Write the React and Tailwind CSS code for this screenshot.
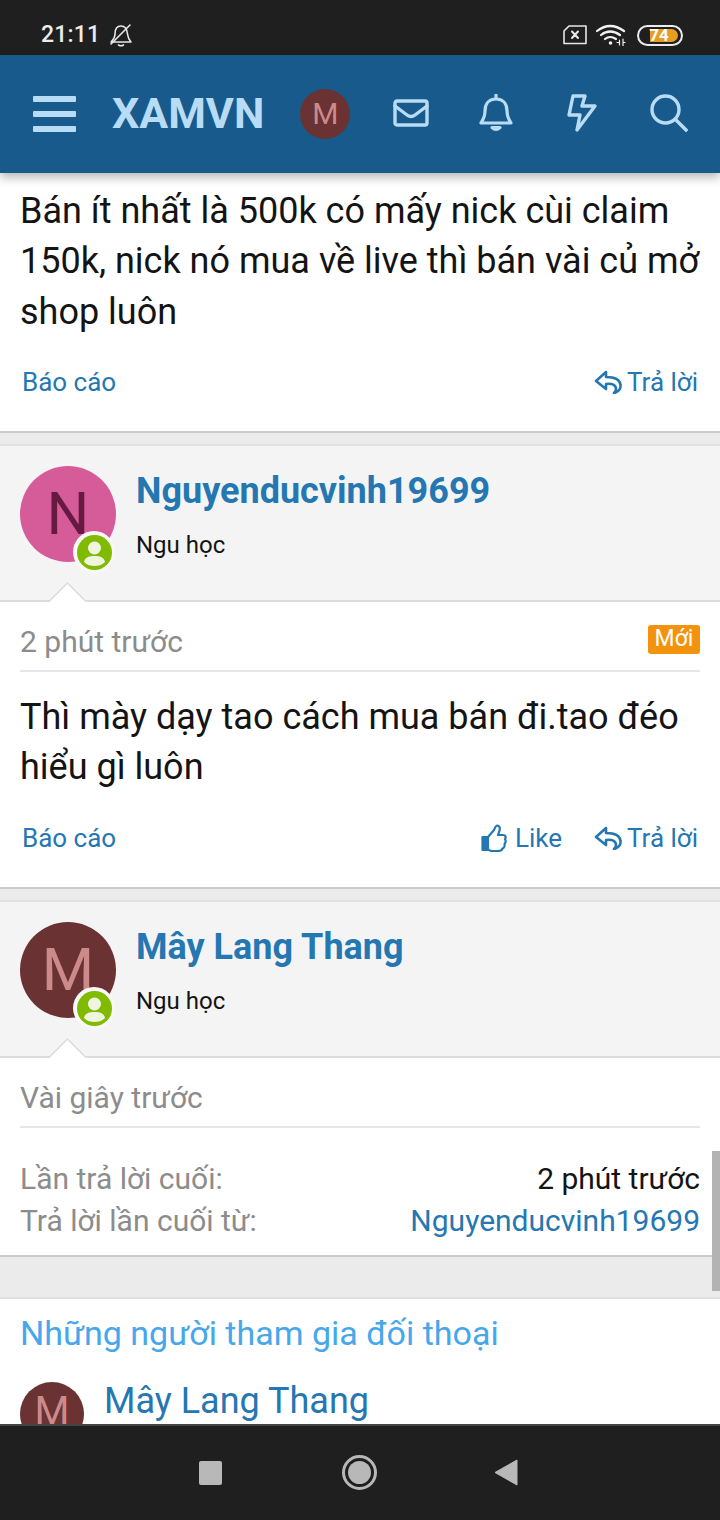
import React from 'react'

const MenuIcon = () => (
  <svg width="44" height="36" viewBox="0 0 44 36" fill="#b8dcf5">
    <rect x="0" y="0" width="43" height="6" rx="1" />
    <rect x="0" y="15" width="43" height="6" rx="1" />
    <rect x="0" y="30" width="43" height="6" rx="1" />
  </svg>
)

const MailIcon = () => (
  <svg width="36" height="28" viewBox="0 0 36 28" fill="none" stroke="#b8dcf5" strokeWidth="3.4" strokeLinejoin="round" strokeLinecap="round">
    <rect x="2" y="2" width="32" height="24" rx="2" />
    <path d="M2 7 L14 16 Q18 19 22 16 L34 7" />
  </svg>
)

const BellIcon = () => (
  <svg width="34" height="38" viewBox="0 0 34 38" fill="none" stroke="#b8dcf5" strokeWidth="3.2" strokeLinejoin="round" strokeLinecap="round">
    <path d="M17 5 C9 5 6 11 6 17 C6 23 4 26 2 29 H32 C30 26 28 23 28 17 C28 11 25 5 17 5 Z" />
    <path d="M17 1 V4" />
    <path d="M13 33.5 Q17 37 21 33.5 Z" fill="#b8dcf5" />
  </svg>
)

const BoltIcon = () => (
  <svg width="30" height="38" viewBox="0 0 30 38" fill="none" stroke="#b8dcf5" strokeWidth="3.4" strokeLinejoin="round" strokeLinecap="round">
    <path d="M6 2 H18 L15 12 H28 L10 36 L13 21 H2 Z" />
  </svg>
)

const SearchIcon = () => (
  <svg width="38" height="38" viewBox="0 0 38 38" fill="none" stroke="#b8dcf5" strokeWidth="3.4" strokeLinecap="round">
    <circle cx="15.5" cy="15.5" r="13.5" />
    <path d="M25.5 25.5 L36 36" strokeLinecap="square" />
  </svg>
)

const MutedBell = () => (
  <svg width="24" height="24" viewBox="0 0 24 24" fill="none" stroke="#e8e8e8" strokeWidth="1.6" strokeLinejoin="round" strokeLinecap="round">
    <path d="M12 3 C7 3 6 8 6 11 C6 14 4 17 2 19 H22 C20 17 19 15 18.5 11 C18 6 16 3 12 3 Z" />
    <path d="M9.5 22 Q12 23.5 14.5 22" />
    <path d="M2 21 L21 2" />
  </svg>
)

const SimIcon = () => (
  <svg width="26" height="20" viewBox="0 0 26 20" fill="none" stroke="#e8e8e8" strokeWidth="1.6" strokeLinejoin="round" strokeLinecap="round">
    <path d="M7 1 H24 V18.5 H2 V6 Z" />
    <path d="M10 6.5 L16 13 M16 6.5 L10 13" strokeWidth="2" />
  </svg>
)

const WifiIcon = () => (
  <svg width="30" height="22" viewBox="0 0 30 22" fill="none" stroke="#f2f2f2" strokeWidth="2.2" strokeLinecap="round">
    <path d="M1 7 Q14 -3 28 7" />
    <path d="M5 11 Q14 4 24 11" />
    <path d="M9 15 Q14 11 20 15" />
    <circle cx="14.5" cy="19" r="1.8" fill="#f2f2f2" stroke="none" />
    <path d="M23.5 16 V21 M27 15 V22 M21 18.5 H23 M27 18.5 H29" strokeWidth="1.2" />
  </svg>
)

const ThumbIcon = () => (
  <svg width="26" height="28" viewBox="0 0 26 28" fill="none" stroke="#2577b1" strokeWidth="2.2" strokeLinejoin="round" strokeLinecap="round">
    <path d="M7 13 L13 6 C14 4 14 2 16 1.5 C19 1.5 19.5 5 18 8 L17 11 H22 C25 11 25 14 24 15 C25 17 24.5 19 23.5 20 C24 22 23 24 21.5 24.5 C21 26.5 19 27 17 27 H11 C9 27 8 26 7 25.5" />
    <rect x="1.5" y="13" width="5.5" height="13" fill="#2577b1" />
  </svg>
)

const ReplyIcon = () => (
  <svg width="28" height="24" viewBox="0 0 28 24" fill="none" stroke="#2577b1" strokeWidth="2.6" strokeLinejoin="round" strokeLinecap="round">
    <path d="M12 2 L2 11 L12 19 V14 C18 13 22 15 22 19 C22 21 21 22 20 23 C24 22 27 19 26.5 15 C26 9 20 7 12 7 Z" />
  </svg>
)

const PersonBadge = () => (
  <div className="absolute left-[73px] top-[85px] w-[42px] h-[42px] rounded-full bg-[#f9f9f9] flex items-center justify-center">
    <svg width="35" height="35" viewBox="0 0 35 35">
      <circle cx="17.5" cy="17.5" r="17.5" fill="#80bb00" />
      <circle cx="17.5" cy="13" r="6.5" fill="#f0f5e0" />
      <path d="M7 27 C8 22 12 21 17.5 21 C23 21 27 22 28 27 C25 30 21 31 17.5 31 C14 31 10 30 7 27 Z" fill="#f0f5e0" />
    </svg>
  </div>
)

const UserHead = ({ initial, bg, fg, name }) => (
  <div className="relative bg-[#f4f4f4] border-t-2 border-b-2 border-t-[#e0e0e0] border-b-[#dcdcdc] h-[158px] pl-5 pt-[20px]">
    <div className="flex">
      <div className="w-24 h-24 shrink-0 rounded-full flex items-center justify-center text-[60px] leading-none" style={{ backgroundColor: bg, color: fg }}>
        {initial}
      </div>
      <div className="pl-5 pt-[1px]">
        <div className="text-[36px] leading-[48px] font-bold text-[#2577b1]">{name}</div>
        <div className="text-[24px] leading-[32px] mt-[14px] text-[#141414]">Ngu học</div>
      </div>
    </div>
    <PersonBadge />
    {/* notch */}
    <svg className="absolute left-[48px] -bottom-[2px]" width="40" height="20" viewBox="0 0 40 20">
      <path d="M1 20 L20 1 L39 20 Z" fill="#ffffff" />
      <path d="M1 19.5 L19.5 1 L38 19.5" fill="none" stroke="#dcdcdc" strokeWidth="1.5" />
    </svg>
  </div>
)

const Gap = () => <div className="h-[13px] bg-[#ebebeb] border-t-2 border-[#cbcbcb]" />

const Actions = ({ like }) => (
  <div className="flex items-center justify-between px-[22px] text-[26px] leading-8 text-[#2577b1]">
    <span>Báo cáo</span>
    <div className="flex items-center gap-[32px]">
      {like && (
        <span className="flex items-center gap-[8px]"><ThumbIcon />Like</span>
      )}
      <span className="flex items-center gap-[5px]"><ReplyIcon />Trả lời</span>
    </div>
  </div>
)

export default function App() {
  return (
    <div className="relative h-[1520px] w-[720px] flex flex-col overflow-hidden bg-white font-['Roboto',sans-serif]">
      {/* status bar */}
      <div className="h-[55px] shrink-0 bg-[#1f1f1f] flex items-center justify-between pl-[41px] pr-[37px] pt-[20px] pb-[5px]">
        <div className="flex items-center gap-[10px]">
          <span className="text-[23px] font-medium tracking-[0.2px] text-[#ececec]">21:11</span>
          <div className="-ml-[1px]"><MutedBell /></div>
        </div>
        <div className="flex items-center gap-[8px]">
          <SimIcon />
          <WifiIcon />
          <div className="relative w-[46px] h-[21px] rounded-full border-2 border-[#ececec] ml-[3px] pl-[11px] pr-[2px] py-[2px]">
            <div className="h-full w-[28px] rounded-r-full bg-[#e59e22]" />
            <span className="absolute inset-0 flex items-center justify-center pr-[2px] text-[17px] leading-none font-bold text-white">74</span>
          </div>
        </div>
      </div>

      {/* app header */}
      <div className="relative z-10 h-[118px] shrink-0 bg-[#185a8c] shadow-[0_4px_10px_rgba(0,0,0,0.3)] flex items-center pl-[33px] pb-[1px]">
        <MenuIcon />
        <span className="ml-[35px] text-[43px] leading-none font-bold text-[#b8dcf5]">XAMVN</span>
        <div className="ml-[36px] w-[50px] h-[50px] rounded-full bg-[#6a3232] flex items-center justify-center text-[30px] leading-none text-[#cc8a8a]">M</div>
        <div className="ml-[43px] -mt-[1px]"><MailIcon /></div>
        <div className="ml-[50px] -mt-[1px]"><BellIcon /></div>
        <div className="ml-[54px] -mt-[1px]"><BoltIcon /></div>
        <div className="ml-[53px] -mt-[1px]"><SearchIcon /></div>
      </div>

      {/* thread */}
      <div className="relative flex-1 overflow-hidden text-[#141414]">
        <div className="pl-5 pr-2 pt-[13px] text-[36px] leading-[50.4px] h-[193px]">
          Bán ít nhất là 500k có mấy nick cùi claim 150k, nick nó mua về live thì bán vài củ mở shop luôn
        </div>
        <div className="h-[65px]"><Actions /></div>
        <Gap />

        <UserHead initial="N" bg="#d65c99" fg="#661a42" name="Nguyenducvinh19699" />
        <div className="px-5">
          <div className="h-[70px] border-b-2 border-[#e6e6e6] flex items-center justify-between pt-[10px]">
            <span className="text-[30px] text-[#8c8c8c]">2 phút trước</span>
            <span className="self-start mt-[13px] h-[29px] w-[52px] text-center rounded-[3px] bg-[#f3920d] text-white text-[23px] leading-[28px]">Mới</span>
          </div>
        </div>
        <div className="pl-5 pr-2 pt-[20px] text-[36px] leading-[50.4px] h-[150px]">
          Thì mày dạy tao cách mua bán đi.tao đéo hiểu gì luôn
        </div>
        <div className="h-[65px]"><Actions like /></div>
        <Gap />

        <UserHead initial="M" bg="#6a3232" fg="#cc8a8a" name="Mây Lang Thang" />
        <div className="px-5">
          <div className="h-[70px] border-b-2 border-[#e6e6e6] flex items-center pt-[10px]">
            <span className="text-[30px] text-[#8c8c8c]">Vài giây trước</span>
          </div>
          <div className="pt-[30px] text-[30px] leading-[42px] h-[127px]">
            <div className="flex justify-between">
              <span className="text-[#8c8c8c]">Lần trả lời cuối:</span>
              <span>2 phút trước</span>
            </div>
            <div className="flex justify-between">
              <span className="text-[#8c8c8c]">Trả lời lần cuối từ:</span>
              <span className="text-[#2577b1]">Nguyenducvinh19699</span>
            </div>
          </div>
        </div>
        <div className="h-[44px] bg-[#ebebeb] border-t-2 border-[#cbcbcb] border-b-2 border-b-[#e0e0e0]" />
        <div className="px-5 pt-[11px] text-[34px] leading-[46px] text-[#47a7eb]">Những người tham gia đối thoại</div>
        <div className="flex pl-5 pt-[26px] gap-5">
          <div className="w-16 h-16 shrink-0 rounded-full bg-[#6a3232] flex items-center justify-center pb-1 text-[40px] leading-none text-[#cc8a8a]">M</div>
          <div className="text-[36px] leading-[42px] text-[#2577b1] -mt-[2px]">Mây Lang Thang</div>
        </div>
        {/* overlay scrollbar */}
        <div className="absolute right-0 top-[978px] w-2 h-[140px] bg-[#b3b3b3]" />
      </div>

      {/* nav bar */}
      <div className="h-[96px] shrink-0 bg-[#1f1f1f] border-t-2 border-[#444444] flex items-center pl-[199px] pb-[1px]">
        <div className="w-[23px] h-[24px] rounded-[2px] bg-[#b8b8b8] mr-[120px]" />
        <div className="w-[35px] h-[35px] rounded-full border-[3px] border-[#b8b8b8] p-[3px] mr-[117px]">
          <div className="w-full h-full rounded-full bg-[#b8b8b8]" />
        </div>
        <svg width="24" height="27" viewBox="0 0 24 27">
          <path d="M23 1 V26 L1 13.5 Z" fill="#b8b8b8" stroke="#b8b8b8" strokeLinejoin="round" />
        </svg>
      </div>
    </div>
  )
}
